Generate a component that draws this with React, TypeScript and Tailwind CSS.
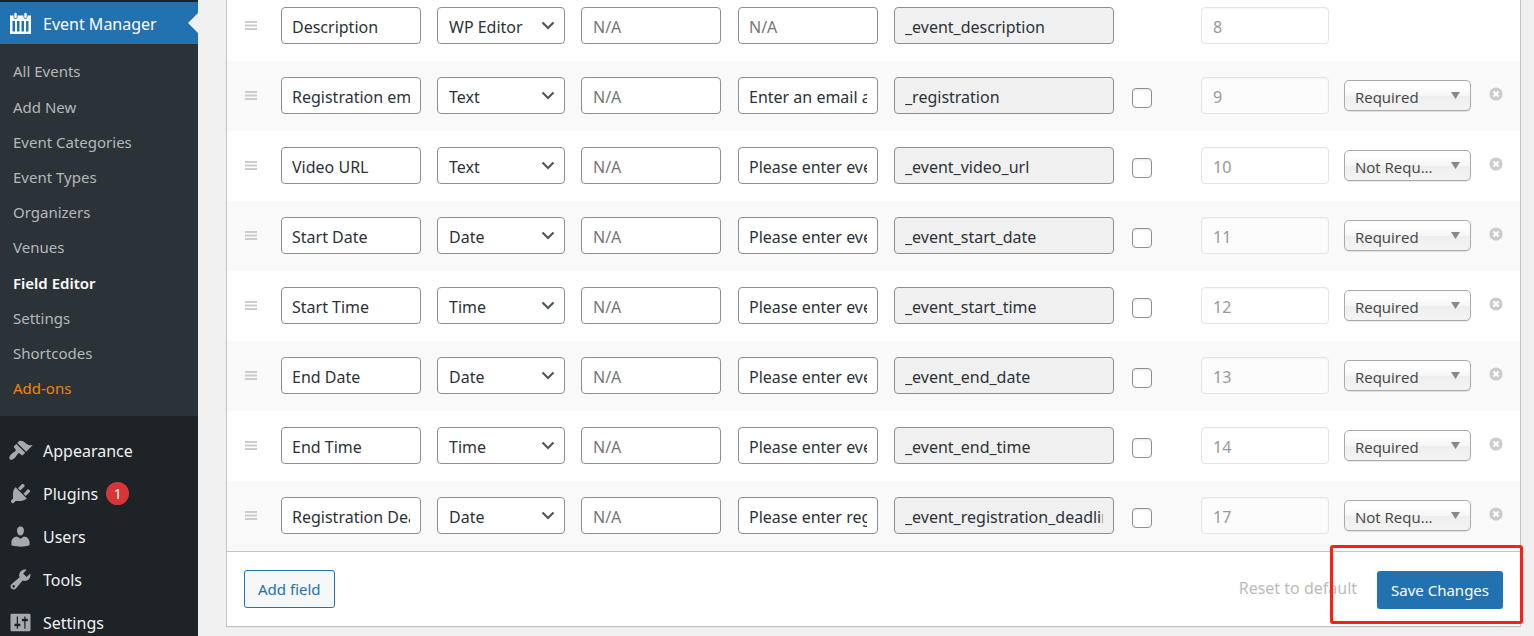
import React from 'react';

type Field = {
  label: string;
  type: string;
  description: string | null;
  placeholder: string;
  meta: string;
  priority: number;
  validation: 'Required' | 'Not Required' | null;
};

const fields: Field[] = [
  { label: 'Description', type: 'WP Editor', description: null, placeholder: '', meta: '_event_description', priority: 8, validation: null },
  { label: 'Registration email/URL', type: 'Text', description: null, placeholder: 'Enter an email address', meta: '_registration', priority: 9, validation: 'Required' },
  { label: 'Video URL', type: 'Text', description: null, placeholder: 'Please enter event video', meta: '_event_video_url', priority: 10, validation: 'Not Required' },
  { label: 'Start Date', type: 'Date', description: null, placeholder: 'Please enter event start date', meta: '_event_start_date', priority: 11, validation: 'Required' },
  { label: 'Start Time', type: 'Time', description: null, placeholder: 'Please enter event start time', meta: '_event_start_time', priority: 12, validation: 'Required' },
  { label: 'End Date', type: 'Date', description: null, placeholder: 'Please enter event end date', meta: '_event_end_date', priority: 13, validation: 'Required' },
  { label: 'End Time', type: 'Time', description: null, placeholder: 'Please enter event end time', meta: '_event_end_time', priority: 14, validation: 'Required' },
  { label: 'Registration Deadline', type: 'Date', description: null, placeholder: 'Please enter registration deadline', meta: '_event_registration_deadline', priority: 17, validation: 'Not Required' },
];

const submenu = ['All Events', 'Add New', 'Event Categories', 'Event Types', 'Organizers', 'Venues', 'Field Editor', 'Settings', 'Shortcodes', 'Add-ons'];

const menu = [
  {
    label: 'Appearance',
    path: 'M14.48 11.06L7.41 3.99l1.5-1.5c.5-.56 2.3-.47 3.51.32 1.21.8 1.43 1.28 2.91 2.1 1.18.64 2.45 1.26 4.45.85zm-.71.71L6.7 4.7 4.93 6.47c-.39.39-.39 1.02 0 1.41l1.06 1.06c.39.39.39 1.03 0 1.42-.6.6-1.43 1.11-2.21 1.69-.35.26-.7.53-1.01.84C1.43 14.23.4 16.08 1.4 17.07c.99 1 2.84-.03 4.18-1.36.31-.31.58-.66.85-1.02.57-.78 1.08-1.61 1.69-2.21.39-.39 1.02-.39 1.41 0l1.06 1.06c.39.39 1.02.39 1.41 0z',
  },
  {
    label: 'Plugins',
    badge: 1,
    path: 'M13.11 4.36L9.87 7.6 8 5.73l3.24-3.24c.35-.34 1.05-.2 1.56.32.52.51.66 1.21.31 1.55zm-8 1.77l.91-1.12 9.01 9.01-1.19.84c-.71.71-2.63 1.16-3.82 1.16H6.14L4.9 17.26c-.59.59-1.54.59-2.12 0-.59-.58-.59-1.53 0-2.12l1.24-1.24v-3.88c0-1.13.4-3.19 1.09-3.89zm7.26 3.97l3.24-3.24c.34-.35 1.04-.21 1.55.31.52.51.66 1.21.31 1.55l-3.24 3.25z',
  },
  {
    label: 'Users',
    path: 'M10 9.25c-2.27 0-2.73-3.44-2.73-3.44C7 4.02 7.82 2 9.97 2c2.16 0 2.98 2.02 2.71 3.81 0 0-.41 3.44-2.68 3.44zm0 2.57L12.72 10c2.39 0 4.52 2.33 4.52 4.53v2.49s-3.65 1.13-7.24 1.13c-3.65 0-7.24-1.13-7.24-1.13v-2.49c0-2.25 1.94-4.48 4.47-4.48z',
  },
  {
    label: 'Tools',
    path: 'M16.68 9.77c-1.34 1.34-3.3 1.67-4.95.99l-5.41 6.52c-.99.99-2.59.99-3.58 0s-.99-2.59 0-3.57l6.52-5.42c-.68-1.65-.35-3.61.99-4.95 1.28-1.28 3.12-1.62 4.72-1.06l-2.89 2.89 2.82 2.82 2.86-2.87c.53 1.58.18 3.39-1.08 4.65zM3.81 16.21c.4.39 1.04.39 1.43 0 .4-.4.4-1.04 0-1.43-.39-.4-1.03-.4-1.43 0-.39.39-.39 1.03 0 1.43z',
  },
  {
    label: 'Settings',
    path: 'M18 16V4c0-.55-.45-1-1-1H3c-.55 0-1 .45-1 1v12c0 .55.45 1 1 1h14c.55 0 1-.45 1-1zM8 11h1c.55 0 1 .45 1 1s-.45 1-1 1H8v1.5c0 .28-.22.5-.5.5s-.5-.22-.5-.5V13H6c-.55 0-1-.45-1-1s.45-1 1-1h1V5.5c0-.28.22-.5.5-.5s.5.22.5.5V11zm5-2h-1c-.55 0-1-.45-1-1s.45-1 1-1h1V5.5c0-.28.22-.5.5-.5s.5.22.5.5V7h1c.55 0 1 .45 1 1s-.45 1-1 1h-1v5.5c0 .28-.22.5-.5.5s-.5-.22-.5-.5V9z',
  },
];

function Sidebar() {
  return (
    <nav className="w-[198px] shrink-0 bg-[#1d2327] pt-0.5 text-base">
      <a href="#events" className="relative flex h-[42px] items-center bg-[#2271b1] pl-2 pt-0.5 text-white">
        <svg viewBox="0 0 25 25" className="mr-2.5 size-[25px]" aria-hidden="true">
          <path
            fill="currentColor"
            fillRule="evenodd"
            d="M2 3.500h3.500v1.500a2 2 0 0 0 4 0V3.500h6v1.500a2 2 0 0 0 4 0V3.500H23V22H2zM4.500 9v10.500H7V9zM9 9v10.500h2.500V9zM13.500 9v10.500H16V9zM18 9v10.500h2.500V9z"
          />
          <path stroke="currentColor" strokeWidth="2.400" strokeLinecap="round" d="M7.500 2v3M17.500 2v3" />
        </svg>
        Event Manager
        <svg viewBox="0 0 10 20" className="absolute right-0 top-[11px] h-5 w-2.5 text-[#f0f0f1]" aria-hidden="true">
          <path fill="currentColor" d="M10 0v20L0 10z" />
        </svg>
      </a>
      <ul className="grid min-h-[372px] auto-rows-fr bg-[#2c3338] py-2.5 text-[15px] text-[#b5b8bb]">
        {submenu.map((item) => (
          <li key={item} className="flex items-center">
            <a
              href="#submenu"
              className={
                item === 'Field Editor' ? 'pl-[13px] text-[15px] font-semibold text-white' : item === 'Add-ons' ? 'pl-[13px] text-[#f18500]' : 'pl-[13px]'
              }
            >
              {item}
            </a>
          </li>
        ))}
      </ul>
      <ul className="pt-[13px] text-[#f0f0f1]">
        {menu.map((item) => (
          <li key={item.label}>
            <a href="#menu" className="flex h-[43px] items-center pl-2">
              <svg viewBox="0 0 20 20" className="mr-2.5 size-[25px] text-[#a7aaad]" aria-hidden="true">
                <path fill="currentColor" d={item.path} />
              </svg>
              {item.label}
              {item.badge && (
                <span className="ml-2 flex size-[23px] items-center justify-center rounded-full bg-[#d63638] text-sm text-white">{item.badge}</span>
              )}
            </a>
          </li>
        ))}
      </ul>
    </nav>
  );
}

const box = 'block h-[37px] w-full rounded border border-[#8c8f94] pr-2.5 pt-0.5 text-base text-[#2c3338] placeholder:text-[#757575]';

function FieldRow({ field }: { field: Field }) {
  return (
    <tr className="h-[70px] align-top even:bg-[#f9f9f9]">
      <td className="pl-[18px] pt-[30px]">
        <svg viewBox="0 0 12 9" className="h-[9px] w-3 text-[#ccc]" aria-hidden="true">
          <path fill="currentColor" d="M0 0h12v2H0zM0 3.500h12v2H0zM0 7h12v2H0z" />
        </svg>
      </td>
      <td className="px-2 pt-4">
        <input aria-label="Field label" defaultValue={field.label} className={`${box} bg-white pl-2.5`} />
      </td>
      <td className="px-2 pt-4">
        <div className="relative">
          <select aria-label="Field type" defaultValue={field.type} className={`${box} appearance-none bg-white pl-[11px]`}>
            <option>{field.type}</option>
          </select>
          <svg viewBox="0 0 14 9" className="pointer-events-none absolute right-2.5 top-3.5 h-[9px] w-3.5" fill="none" aria-hidden="true">
            <path d="M1.500 1.500L7 7l5.500-5.500" stroke="#50575e" strokeWidth="2.200" />
          </svg>
        </div>
      </td>
      <td className="pl-2 pr-[9px] pt-4">
        <input aria-label="Description" placeholder="N/A" defaultValue={field.description ?? ''} className={`${box} bg-white pl-[11px]`} />
      </td>
      <td className="px-2 pt-4">
        <input aria-label="Placeholder" placeholder="N/A" defaultValue={field.placeholder} className={`${box} bg-white pl-2.5`} />
      </td>
      <td className="px-2 pt-4">
        <input aria-label="Meta key" readOnly value={field.meta} className={`${box} bg-[#f0f0f0] pl-2.5`} />
      </td>
      <td className="pl-2.5 pt-[27px]">
        {field.validation && (
          <input
            type="checkbox"
            aria-label="Only for admin"
            className="block size-5 appearance-none rounded border border-[#8c8f94] bg-white shadow-[inset_0_1px_2px_rgba(0,0,0,0.1)]"
          />
        )}
      </td>
      <td className="px-2 pt-4">
        <input
          aria-label="Priority"
          disabled
          value={field.priority}
          className="block h-[37px] w-full rounded border border-[#e4e5e6] bg-white/50 pl-[11px] pr-2.5 pt-0.5 text-base text-[#96999c] shadow-[inset_0_1px_2px_rgba(0,0,0,0.04)]"
        />
      </td>
      <td className="pl-[7px] pr-2 pt-[19px]">
        {field.validation && (
          <div className="relative">
            <select
              aria-label="Validation"
              defaultValue={field.validation}
              className="block h-[31px] w-full appearance-none truncate rounded-[5px] border border-[#aaa] bg-[linear-gradient(#fff_20%,#f6f6f6_50%,#eee_52%,#f4f4f4)] pl-2.5 pr-[34px] pt-[3px] font-['Open_Sans','Noto_Sans',sans-serif] text-[15px] text-[#444] shadow-[0_1px_1px_rgba(0,0,0,0.1)]"
            >
              <option>Required</option>
              <option>Not Required</option>
            </select>
            <svg viewBox="0 0 9 7" className="pointer-events-none absolute right-[11px] top-3 h-[7px] w-[9px]" aria-hidden="true">
              <path fill="#888" d="M0 0h9L4.500 7z" />
            </svg>
          </div>
        )}
      </td>
      <td className="pl-2.5 pt-[26px]">
        {field.validation && (
          <button type="button" aria-label="Delete field" className="block">
            <svg viewBox="0 0 14 14" className="size-3.5" aria-hidden="true">
              <circle cx="7" cy="7" r="6.600" fill="#ccc" />
              <path d="M4.500 4.500l5 5M9.500 4.500l-5 5" stroke="#fff" strokeWidth="2" />
            </svg>
          </button>
        )}
      </td>
    </tr>
  );
}

export default function App() {
  return (
    <div className="flex h-screen overflow-hidden bg-[#f0f0f1] font-['Noto_Sans','Open_Sans',sans-serif]">
      <Sidebar />
      <main className="min-w-0 flex-1 pl-7 pr-[13px]">
        <form onSubmit={(e) => e.preventDefault()} className="border-x border-b border-[#c3c4c7] bg-white shadow-[0_1px_1px_rgba(0,0,0,0.04)]">
          <div className="overflow-hidden border-b border-[#c3c4c7]">
            <table className="-mt-[9px] w-full table-fixed border-collapse">
              <colgroup>
                <col className="w-[46px]" />
                <col className="w-[156px]" />
                <col className="w-[144px]" />
                <col className="w-[157px]" />
                <col className="w-[156px]" />
                <col className="w-[236px]" />
                <col className="w-[71px]" />
                <col className="w-[144px]" />
                <col className="w-[142px]" />
                <col className="w-[41px]" />
              </colgroup>
              <tbody>
                {fields.map((field) => (
                  <FieldRow key={field.meta} field={field} />
                ))}
              </tbody>
            </table>
          </div>
          <div className="flex items-center justify-between px-[17px] py-[17px]">
            <button type="button" className="h-[38px] rounded-[3px] border border-[#2271b1] bg-[#f6f7f7] px-[13px] text-[15px] text-[#2271b1]">
              Add field
            </button>
            <div className="flex items-center gap-5 pt-0.5">
              <a href="#reset" className="pb-1 text-base text-[#bbb]">
                Reset to default
              </a>
              <div className="relative">
                <button type="submit" className="block h-[38px] rounded-[3px] bg-[#2271b1] px-3.5 text-[15px] text-white">
                  Save Changes
                </button>
                <div className="pointer-events-none absolute -bottom-[15px] -left-[47px] -right-5 -top-[26px] rounded-[3px] border-[3px] border-[#ff1f12]" />
              </div>
            </div>
          </div>
        </form>
      </main>
    </div>
  );
}
